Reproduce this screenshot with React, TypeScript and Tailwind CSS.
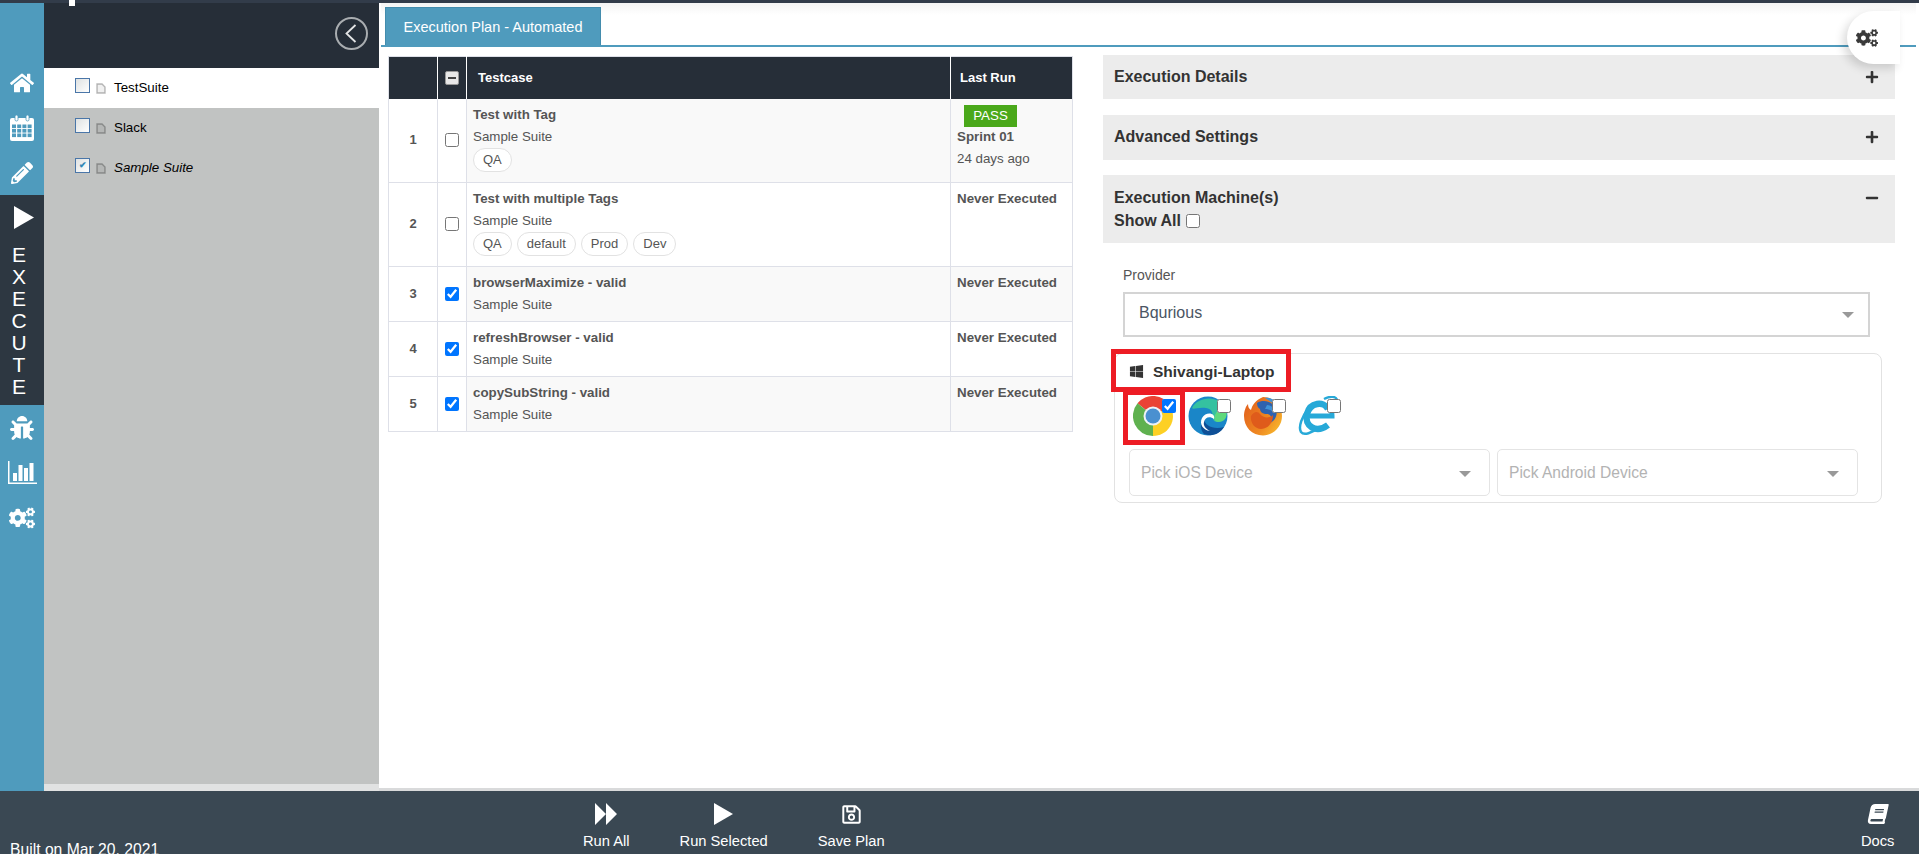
import {
  FaBook,
  FaBug,
  FaCogs,
  FaHome,
  FaMinus,
  FaPencilAlt,
  FaPlus,
  FaRegSave,
  FaWindows,
} from "react-icons/fa";

const tests = [
  { id: 1, name: "Test with Tag", checked: false, tags: ["QA"], run: "pass" },
  { id: 2, name: "Test with multiple Tags", checked: false, tags: ["QA", "default", "Prod", "Dev"], run: "never" },
  { id: 3, name: "browserMaximize - valid", checked: true, tags: [], run: "never" },
  { id: 4, name: "refreshBrowser - valid", checked: true, tags: [], run: "never" },
  { id: 5, name: "copySubString - valid", checked: true, tags: [], run: "never" },
];

const CalendarIcon = () => (
  <svg viewBox="0 0 24 26" className="w-[24px] h-[26px]" fill="#fff">
    <path d="M2 3h20a2 2 0 0 1 2 2v19a2 2 0 0 1-2 2H2a2 2 0 0 1-2-2V5a2 2 0 0 1 2-2z" />
    <rect x="5" y="0" width="3" height="6" rx="1.5" stroke="#4f9bbd" strokeWidth="0.8" />
    <rect x="16" y="0" width="3" height="6" rx="1.5" stroke="#4f9bbd" strokeWidth="0.8" />
    <g fill="#4f9bbd">
      {[9.5, 14, 18.5].map((y) =>
        [2, 7.2, 12.4, 17.6].map((x) => <rect key={`${x}-${y}`} x={x} y={y} width="4" height="3.6" />)
      )}
    </g>
  </svg>
);

const ChartIcon = () => (
  <svg viewBox="0 0 29 23" className="w-[29px] h-[23px]" fill="#fff">
    <rect x="0" y="0" width="1.5" height="23" />
    <rect x="0" y="21.5" width="29" height="1.5" />
    <rect x="5" y="12" width="4" height="8" />
    <rect x="10.5" y="4" width="4" height="16" />
    <rect x="16" y="7" width="4" height="13" />
    <rect x="21.5" y="2" width="4" height="18" />
  </svg>
);

const PlayIcon = ({ className }: { className: string }) => (
  <svg viewBox="0 0 20 23" className={className} fill="#fff">
    <polygon points="0,0 20,11.5 0,23" />
  </svg>
);

const ForwardIcon = () => (
  <svg viewBox="0 0 22 22" className="w-[22px] h-[22px]" fill="#fff">
    <polygon points="0,0 11,11 11,0 22,11 11,22 11,11 0,22" />
  </svg>
);

const Rail = () => (
  <div className="w-[44px] shrink-0 bg-[#4f9bbd] pt-[57px] text-white">
    <RailIcon><FaHome size={24} /></RailIcon>
    <RailIcon><CalendarIcon /></RailIcon>
    <RailIcon><FaPencilAlt size={22} /></RailIcon>
    <div className="h-[210px] bg-[#2d3741] flex flex-col items-center">
      <PlayIcon className="w-[20px] h-[23px] mt-[11px] ml-[3px] shrink-0" />
      <div className="mt-[15px] flex flex-col items-center text-[21px] leading-[22px] pr-[6px]">
        {"EXECUTE".split("").map((letter, i) => (
          <span key={i}>{letter}</span>
        ))}
      </div>
    </div>
    <RailIcon><FaBug size={24} /></RailIcon>
    <RailIcon><ChartIcon /></RailIcon>
    <RailIcon><FaCogs size={26} /></RailIcon>
  </div>
);

const RailIcon = ({ children }: { children: React.ReactNode }) => (
  <div className="h-[45px] flex items-center justify-center">{children}</div>
);

const Sidebar = () => (
  <div className="w-[335px] shrink-0 flex flex-col bg-[#c1c3c2]">
    <div className="h-[65px] bg-[#262e38] flex justify-end pt-[14px] pr-[11px]">
      <div className="w-[33px] h-[33px] rounded-full border-2 border-[#a9adb0]">
        <svg viewBox="0 0 29 29" className="w-[29px] h-[29px]" fill="none" stroke="#e4e5e6" strokeWidth="1.8">
          <polyline points="18.5,6 9.5,14.5 18.5,23" />
        </svg>
      </div>
    </div>
    <SuiteRow name="TestSuite" active />
    <SuiteRow name="Slack" />
    <SuiteRow name="Sample Suite" checked italic />
    <div className="flex-1" />
    <div className="h-[7px] bg-[#e1e2e2]" />
  </div>
);

const SuiteRow = ({
  name,
  active,
  checked,
  italic,
}: {
  name: string;
  active?: boolean;
  checked?: boolean;
  italic?: boolean;
}) => (
  <div className={`h-[40px] flex items-start pl-[31px] pt-[10px] ${active ? "bg-white" : ""}`}>
    <div className="w-[15px] h-[15px] border border-[#4a76a8] bg-gradient-to-br from-[#dfe2e2] to-white flex items-center justify-center text-[#2f86b5] text-[9px] font-bold leading-none">
      {checked ? "✔" : ""}
    </div>
    <svg viewBox="0 0 10 11" className="w-[10px] h-[11px] ml-[6px] mt-[5px]" fill="rgba(0,0,0,0.06)" stroke="rgba(0,0,0,0.27)" strokeWidth="1.4">
      <path d="M1 1h5l3 3v6H1z" />
    </svg>
    <span className={`ml-[8px] text-[13.33px] leading-[20px] text-black ${italic ? "italic" : ""}`}>{name}</span>
  </div>
);

const Tag = ({ label }: { label: string }) => (
  <span className="h-[24px] px-[9px] rounded-full border border-[#e2e2e2] bg-white text-[13px] leading-[22px] text-[#555]">
    {label}
  </span>
);

const TestRow = ({ test }: { test: (typeof tests)[number] }) => {
  const stripe = test.id % 2 === 1 ? "bg-[#f9f9f9]" : "bg-white";
  return (
    <tr className="border-b border-[#dee0e8] align-top">
      <td className="border-x border-[#dee0e8] text-center align-middle text-[13px] font-bold text-[#555]">{test.id}</td>
      <td className="border-r border-[#dee0e8] align-middle">
        <input type="checkbox" defaultChecked={test.checked} className="block mx-auto w-[14px] h-[14px]" />
      </td>
      <td className={`border-r border-[#dee0e8] pl-[6px] py-[5px] text-[13.33px] leading-[22px] text-[#555] ${stripe}`}>
        <div className="font-bold">{test.name}</div>
        <div>Sample Suite</div>
        {test.tags.length > 0 && (
          <div className="flex gap-[5px] pb-[5px]">
            {test.tags.map((tag) => (
              <Tag key={tag} label={tag} />
            ))}
          </div>
        )}
      </td>
      <td className={`border-r border-[#dee0e8] pl-[6px] pt-[5px] text-[13.33px] leading-[22px] text-[#555] ${stripe}`}>
        {test.run === "pass" ? (
          <>
            <div className="ml-[7px] mt-[1px] mb-[-1px] w-[53px] h-[22px] bg-[#4aa81a] text-white text-center">PASS</div>
            <div className="font-bold">Sprint 01</div>
            <div>24 days ago</div>
          </>
        ) : (
          <div className="font-bold">Never Executed</div>
        )}
      </td>
    </tr>
  );
};

const TestTable = () => (
  <table className="w-[684px] self-start table-fixed border-collapse border border-[#dee0e8]">
    <colgroup>
      <col className="w-[49px]" />
      <col className="w-[29px]" />
      <col className="w-[484px]" />
      <col className="w-[122px]" />
    </colgroup>
    <thead>
      <tr className="h-[42px] bg-[#262e38] text-white text-[13px] font-bold">
        <th className="border-r border-white" />
        <th className="border-r border-white">
          <div className="w-[14px] h-[14px] mx-auto rounded-[2px] bg-[#e8e8e8] border border-[#999] flex items-center justify-center">
            <div className="w-[8px] h-[2px] bg-[#444]" />
          </div>
        </th>
        <th className="border-r border-white text-left pl-[11px]">Testcase</th>
        <th className="text-left pl-[9px]">Last Run</th>
      </tr>
    </thead>
    <tbody>
      {tests.map((test) => (
        <TestRow key={test.id} test={test} />
      ))}
    </tbody>
  </table>
);

const Panel = ({ title, open, height }: { title: string; open?: boolean; height: string }) => (
  <div className={`${height} bg-[#ececec] pl-[11px] pr-[16px] text-[#333] ${open ? "pt-[12px]" : "pt-[11px]"}`}>
    <div className="flex items-center justify-between">
      <span className="text-[16px] leading-[22px] font-bold">{title}</span>
      {open ? <FaMinus size={14} /> : <FaPlus size={14} />}
    </div>
    {open && (
      <div className="flex items-center text-[16px] leading-[22px] font-bold mt-[1px]">
        Show All
        <input type="checkbox" className="ml-[5px] w-[14px] h-[14px]" />
      </div>
    )}
  </div>
);

const ChromeIcon = () => (
  <svg viewBox="0 0 40 40" className="w-[40px] h-[40px]">
    <path d="M20 20 L37.3 10 A20 20 0 0 0 4.5 7.3 Z" fill="#ea4335" />
    <path d="M20 20 L4.5 7.3 A20 20 0 0 0 20 40 Z" fill="#5fb14f" />
    <path d="M20 20 L20 40 A20 20 0 0 0 37.3 10 Z" fill="#fdd024" />
    <circle cx="20" cy="20" r="9.5" fill="#eef2f6" />
    <circle cx="20" cy="20" r="7.5" fill="#4a90d0" />
  </svg>
);

const EdgeIcon = () => (
  <svg viewBox="0 0 40 40" className="w-[40px] h-[40px]">
    <circle cx="20" cy="20" r="19.5" fill="#1a86c8" />
    <path d="M4 12 C10 0 32 -2 38 14 C40 22 36 26 30 26 C20 26 30 14 18 12 C10 11 5 14 4 12 Z" fill="#35c1a0" />
    <path d="M38 14 C40 22 36 26 30 26 C26 26 26 22 27 19 C30 12 36 10 38 14 Z" fill="#5fd97c" />
    <path d="M16 22 C16 30 26 34 36 31 C32 38 24 41 16 38 C12 34 12 26 16 22 Z" fill="#0f4f96" />
    <path d="M14 22 C18 15 28 17 26 23 C22 20 17 21 16 26 C15 30 18 33 22 35 C15 34 11 28 14 22 Z" fill="#fff" />
  </svg>
);

const FirefoxIcon = () => (
  <svg viewBox="0 0 40 40" className="w-[40px] h-[40px]">
    <defs>
      <linearGradient id="foxBody" x1="0" y1="0.2" x2="1" y2="0.9">
        <stop offset="0" stopColor="#e2601c" />
        <stop offset="0.6" stopColor="#ef8a22" />
        <stop offset="1" stopColor="#f9c02f" />
      </linearGradient>
    </defs>
    <path d="M20 1 C31 1 39 10 39 20 C39 31 30 39.5 20 39.5 C9 39.5 1 31 1 20 C1 15 3 10 5 8 C5 11 6 13 8 14 C9 9 13 4 20 1 Z" fill="url(#foxBody)" />
    <path d="M14 7 C20 3 30 5 33 13 C35 19 32 25 27 27 C30 23 28 18 24 18 C20 18 17 16 17 13 C15 12 14 10 14 7 Z" fill="#2f62ae" />
    <path d="M24 9 C28 9 31 12 31 16 C28 14 25 13 22 13 Z" fill="#3f93d8" />
    <path d="M22 2 C27 1 33 4 36 10 L31 8 C28 6 25 4 22 2 Z" fill="#3f93d8" />
    <path d="M8 20 C11 15 15 15 17 18 C20 22 26 23 30 19 C30 27 25 33 18 33 C12 33 7 27 8 20 Z" fill="#df5b1b" />
  </svg>
);

const IeIcon = () => (
  <svg viewBox="0 0 40 40" className="w-[40px] h-[40px]" fill="none">
    <path d="M30 13 C26 5 12 6 9 18 C6 30 18 38 30 29" stroke="#27a9d8" strokeWidth="6.5" />
    <path d="M9 20 H34 C34 14 33 11 30 9" stroke="#27a9d8" strokeWidth="5" />
    <path d="M11 12 C4 20 0 31 3 36 C6 40 14 37 21 31" stroke="#27a9d8" strokeWidth="2.5" />
    <path d="M26 3 C32 0 38 0 39 4 C40 7 37 11 35 14" stroke="#27a9d8" strokeWidth="2.5" />
  </svg>
);

const Browser = ({ checked, children }: { checked?: boolean; children: React.ReactNode }) => (
  <div className="relative w-[40px] h-[40px]">
    {children}
    <input type="checkbox" defaultChecked={checked} className="absolute top-[3px] right-[-3px] w-[14px] h-[14px]" />
  </div>
);

const DeviceSelect = ({ label }: { label: string }) => (
  <div className="flex-1 h-[47px] rounded-[5px] border border-[#e4e4e4] flex items-center justify-between pl-[11px] pr-[18px] text-[15.6px] text-[#b3b3b3]">
    {label}
    <Caret />
  </div>
);

const Caret = () => <div className="mt-[3px] border-x-[6px] border-x-transparent border-t-[6px] border-t-[#999]" />;

const MachineCard = () => (
  <div className="relative ml-[11px] mr-[13px] h-[150px] rounded-[8px] border border-[#e2e2e2] pl-[14px] pr-[23px]">
    <div className="flex items-center h-[35px] text-[#333]">
      <FaWindows size={15} />
      <span className="ml-[9px] text-[15.5px] font-bold">Shivangi-Laptop</span>
    </div>
    <div className="flex gap-[15px] mt-[7px] ml-[4px]">
      <Browser checked><ChromeIcon /></Browser>
      <Browser><EdgeIcon /></Browser>
      <Browser><FirefoxIcon /></Browser>
      <Browser><IeIcon /></Browser>
    </div>
    <div className="flex gap-[7px] mt-[13px]">
      <DeviceSelect label="Pick iOS Device" />
      <DeviceSelect label="Pick Android Device" />
    </div>
    <div className="absolute left-[-4px] top-[-5px] w-[180px] h-[43px] border-[5px] border-[#ed1c24]" />
    <div className="absolute left-[8px] top-[36px] w-[62px] h-[55px] border-[5px] border-[#ed1c24]" />
  </div>
);

const RightColumn = () => (
  <div className="w-[792px] ml-[30px] mt-[-1px] flex flex-col">
    <Panel title="Execution Details" height="h-[44px]" />
    <Panel title="Advanced Settings" height="h-[45px] mt-[16px]" />
    <Panel title="Execution Machine(s)" height="h-[68px] mt-[15px]" open />
    <div className="pl-[20px] pt-[23px] text-[14px] leading-[18px] text-[#555]">Provider</div>
    <div className="ml-[20px] mr-[25px] mt-[8px] h-[45px] border-2 border-[#d4d4d4] flex items-center justify-between pl-[14px] pr-[14px] pb-[3px] text-[16px] text-[#4a5563] mb-[16px]">
      Bqurious
      <Caret />
    </div>
    <MachineCard />
  </div>
);

const Main = () => (
  <div className="relative flex-1 min-w-0 bg-white border-b-[3px] border-[#d9dadb]">
    <div className="h-[44px] pt-[4px] ml-[2px] mr-[3px] border-b-2 border-[#4f9bbd] bg-gradient-to-b from-[#f4f4f4] to-white to-[12px]">
      <div className="ml-[4px] h-[38px] w-[216px] bg-[#4f9bbd] border-x border-t border-[#438cad] text-white text-[14.5px] leading-[38px] text-center">
        Execution Plan - Automated
      </div>
    </div>
    <div className="flex pl-[9px] pt-[9px]">
      <TestTable />
      <RightColumn />
    </div>
    <div className="absolute top-[8px] left-[1468px] w-[53px] h-[53px] rounded-l-full bg-white shadow-[-4px_4px_10px_rgba(0,0,0,0.15)] flex items-center pl-[9px] text-[#3a3a3a]">
      <FaCogs size={22} />
    </div>
  </div>
);

const FooterAction = ({ label, icon }: { label: string; icon: React.ReactNode }) => (
  <div className="flex flex-col items-center text-white">
    <div className="h-[24px] flex items-center">{icon}</div>
    <span className="mt-[7px] text-[14.7px] leading-[16px]">{label}</span>
  </div>
);

const Footer = () => (
  <div className="relative h-[63px] shrink-0 bg-[#3a4853] text-white overflow-hidden">
    <span className="absolute left-[10px] top-[50px] text-[15.7px] leading-[18px]">Built on Mar 20, 2021</span>
    <div className="flex pt-[11px] pl-[583px] gap-[50px]">
      <FooterAction label="Run All" icon={<ForwardIcon />} />
      <FooterAction label="Run Selected" icon={<PlayIcon className="w-[19px] h-[22px]" />} />
      <FooterAction label="Save Plan" icon={<FaRegSave size={21} />} />
    </div>
    <div className="absolute left-[1861px] top-[11px]">
      <FooterAction label="Docs" icon={<FaBook size={20} className="-skew-x-12" />} />
    </div>
  </div>
);

export default function App() {
  return (
    <div className="w-[1919px] h-[854px] flex flex-col overflow-hidden bg-white font-['Liberation_Sans',Arial,sans-serif]">
      <div className="relative h-[3px] shrink-0 bg-[#323c4a]">
        <div className="absolute left-[69px] top-0 w-[6px] h-[6px] bg-white z-10" />
      </div>
      <div className="flex flex-1 min-h-0">
        <Rail />
        <Sidebar />
        <Main />
      </div>
      <Footer />
    </div>
  );
}
